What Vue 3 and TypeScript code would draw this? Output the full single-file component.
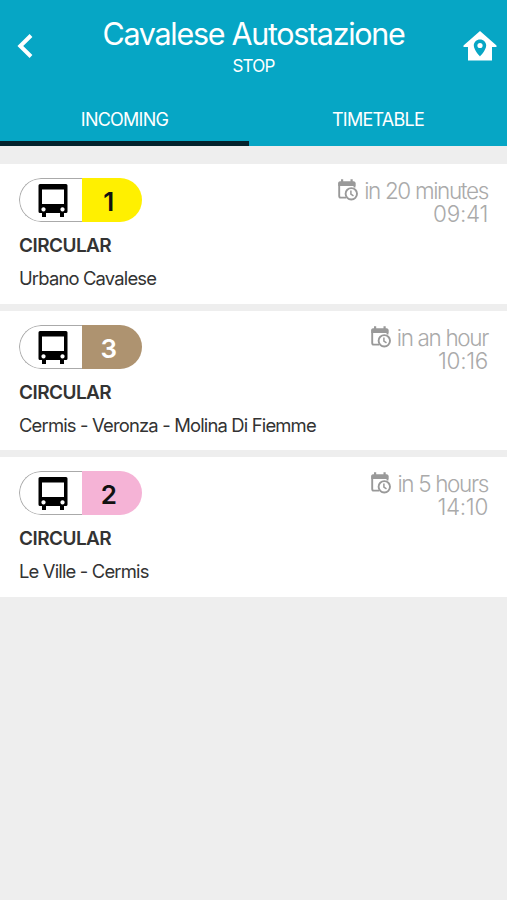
<script setup lang="ts">
interface Arrival {
  line: string
  background: string
  color: string
  route: string
  wait: string
  time: string
}

const arrivals: Arrival[] = [
  { line: '1', background: '#fff000', color: '#111', route: 'Urbano Cavalese', wait: 'in 20 minutes', time: '09:41' },
  { line: '3', background: '#ae9370', color: '#fff', route: 'Cermis - Veronza - Molina Di Fiemme', wait: 'in an hour', time: '10:16' },
  { line: '2', background: '#f5b3d6', color: '#111', route: 'Le Ville - Cermis', wait: 'in 5 hours', time: '14:10' },
]
</script>

<template>
  <main class="screen">
    <header class="header">
      <div class="bar">
        <svg class="back" viewBox="0 0 16 26" aria-hidden="true">
          <path d="M14 2.500 3.300 13l10.700 10.500" fill="none" stroke="#fff" stroke-width="4" />
        </svg>
        <div class="heading">
          <h1 class="title">Cavalese Autostazione</h1>
          <div class="subtitle">STOP</div>
        </div>
        <svg class="home" viewBox="0 0 34 30" aria-hidden="true">
          <path fill="#fff" fill-rule="evenodd" d="M17 0 33.500 14.500V16H29V29.500H5V16H.5V14.500ZM17 8.500c-3.500 0-6.200 2.700-6.200 6.100 0 4.500 6.200 10.900 6.200 10.900s6.200-6.400 6.200-10.900c0-3.400-2.700-6.100-6.200-6.100Z" />
          <circle cx="17" cy="14.500" r="2.600" fill="#fff" />
        </svg>
      </div>
      <nav class="tabs">
        <div class="tab active">INCOMING</div>
        <div class="tab">TIMETABLE</div>
      </nav>
    </header>
    <section class="list">
      <article v-for="item in arrivals" :key="item.line" class="card">
        <div class="top">
          <div class="pill">
            <div class="vehicle">
              <svg class="bus" viewBox="0 0 30 34" aria-hidden="true">
                <path fill="#000" fill-rule="evenodd" d="M2 0H28Q29.500 0 29.500 1.500V27.500Q29.500 29 28 29H26V33H22V29H8V33H4V29H2Q.5 29 .5 27.500V1.500Q.5 0 2 0ZM4 5.500V20H26V5.500ZM5.500 23.300a2.100 2.100 0 1 0 .01 0ZM24.500 23.300a2.100 2.100 0 1 0 .01 0Z" />
              </svg>
            </div>
            <div class="number" :style="{ background: item.background, color: item.color }">{{ item.line }}</div>
          </div>
          <div class="when">
            <div class="wait">
              <svg class="calendar" viewBox="0 0 20 22" aria-hidden="true">
                <path d="M8 18.600H2.700Q1.200 18.600 1.200 17.100V4.500H16.500V8.500" fill="none" stroke="#999" stroke-width="1.900" />
                <path d="M.3 7V4Q.3 2.300 2 2.300H3V.3H5.200V2.300H12.500V.3H14.700V2.300H15.700Q17.400 2.300 17.400 4V7Z" fill="#999" />
                <circle cx="13.300" cy="14.800" r="5.700" fill="#fff" stroke="#999" stroke-width="1.900" />
                <path d="M12.900 11.600V15.100L15.500 16.900" fill="none" stroke="#999" stroke-width="1.500" />
              </svg>
              <span>{{ item.wait }}</span>
            </div>
            <div class="time">{{ item.time }}</div>
          </div>
        </div>
        <h2 class="kind">CIRCULAR</h2>
        <p class="route">{{ item.route }}</p>
      </article>
    </section>
  </main>
</template>

<style>
body {
  margin: 0;
  background: #eee;
}
</style>

<style scoped>
.screen {
  min-height: 900px;
  background: #eee;
  font-family: Inter, "Liberation Sans", sans-serif;
  color: #333;
}
.header {
  height: 146px;
  display: flex;
  flex-direction: column;
  background: #06a6c5;
  color: #fff;
}
.bar {
  display: grid;
  grid-template-columns: 60px 1fr 60px;
  height: 92px;
}
.back {
  width: 16px;
  height: 26px;
  margin: 33px 0 0 17px;
}
.home {
  width: 34px;
  height: 30px;
  margin: 31px 0 0 16px;
}
.heading {
  text-align: center;
  white-space: nowrap;
}
.title {
  margin: 15px 0 0;
  font-size: 30.500px;
  line-height: 38px;
  font-weight: 400;
  letter-spacing: -1.310px;
}
.subtitle {
  margin-top: 3px;
  font-size: 17px;
  line-height: 20px;
  letter-spacing: -0.8px;
}
.tabs {
  flex: 1;
  display: grid;
  grid-template-columns: 249px 1fr;
}
.tab {
  box-sizing: border-box;
  padding-top: 17px;
  text-align: center;
  font-size: 18px;
  line-height: 22px;
  letter-spacing: -0.750px;
}
.active {
  border-bottom: 5px solid #04222c;
}
.list {
  display: flex;
  flex-direction: column;
  gap: 7px;
  padding-top: 18px;
}
.card {
  box-sizing: border-box;
  height: 139.600px;
  padding: 14px 19px 0 19px;
  background: #fff;
}
.top {
  display: flex;
  justify-content: space-between;
  height: 44px;
}
.pill {
  display: flex;
  width: 122.500px;
  height: 44px;
  border-radius: 22px;
  overflow: hidden;
}
.vehicle {
  box-sizing: border-box;
  width: 63px;
  border: 1px solid #aaa;
  border-right: 0;
  border-radius: 22px 0 0 22px;
}
.bus {
  display: block;
  width: 30px;
  height: 34px;
  margin: 5px 0 0 18px;
}
.number {
  box-sizing: border-box;
  width: 59.500px;
  padding-right: 6px;
  text-align: center;
  font-size: 26px;
  line-height: 47px;
  font-weight: 600;
}
.when {
  color: #aaa;
  font-size: 22.500px;
  line-height: 23px;
  font-weight: 300;
  text-align: right;
  white-space: nowrap;
}
.wait {
  display: flex;
  justify-content: flex-end;
  gap: 6px;
  padding-top: 1px;
  letter-spacing: -1.350px;
}
.time {
  letter-spacing: -0.300px;
}
.calendar {
  width: 20px;
  height: 22px;
}
.kind {
  margin: 12px 0 0;
  font-size: 19px;
  line-height: 24px;
  font-weight: 600;
  letter-spacing: -0.550px;
}
.route {
  margin: 8px 0 0;
  font-size: 18.400px;
  line-height: 24px;
  letter-spacing: -0.820px;
  white-space: nowrap;
}
</style>
